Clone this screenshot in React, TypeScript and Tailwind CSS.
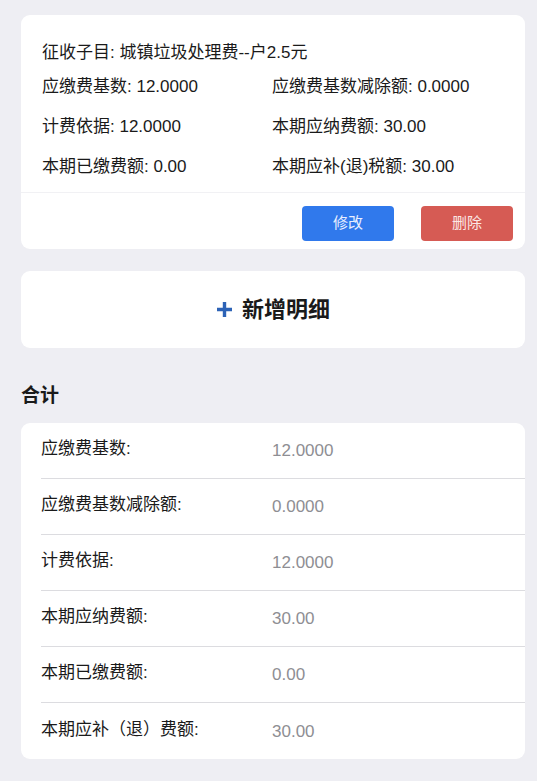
const detail = [
  ["应缴费基数: 12.0000", "应缴费基数减除额: 0.0000"],
  ["计费依据: 12.0000", "本期应纳费额: 30.00"],
  ["本期已缴费额: 0.00", "本期应补(退)税额: 30.00"],
]

const totals = [
  ["应缴费基数:", "12.0000"],
  ["应缴费基数减除额:", "0.0000"],
  ["计费依据:", "12.0000"],
  ["本期应纳费额:", "30.00"],
  ["本期已缴费额:", "0.00"],
  ["本期应补（退）费额:", "30.00"],
]

const App = () => {
  return (
    <div
      className="min-h-screen bg-[#eeeef3] pl-[21px] pr-[12px] pt-[15px] pb-6 text-[#1a1a1a]"
      style={{ fontFamily: '"Liberation Sans", "Noto Sans CJK SC", sans-serif' }}
    >
      {/* detail card */}
      <div className="bg-white rounded-[9px] overflow-hidden">
        <div className="pl-[21px] pt-[26px] pb-[13px]">
          <p className="text-[17px] leading-[24px]">征收子目: 城镇垃圾处理费--户2.5元</p>
          <div className="grid grid-cols-[230px_1fr] gap-y-[16px] mt-[10px]">
            {detail.map((row) =>
              row.map((cell) => (
                <p key={cell} className="text-[17px] leading-[24px] whitespace-nowrap">
                  {cell}
                </p>
              ))
            )}
          </div>
        </div>
        <div className="border-t border-[#f1f1f4] flex justify-end gap-[27px] pr-[12px] pt-[13px] pb-[8px]">
          <button className="w-[92px] h-[35px] rounded-[4px] bg-[#3079ec] text-[15px] text-[#e8efff]">修改</button>
          <button className="w-[92px] h-[35px] rounded-[4px] bg-[#d65b54] text-[15px] text-[#fbe7e6]">删除</button>
        </div>
      </div>

      {/* add button */}
      <div className="mt-[22px] h-[77px] bg-white rounded-[9px] flex items-center justify-center gap-[9px]">
        <svg width="17" height="17" viewBox="0 0 17 17">
          <path d="M8.5 1v15M1 8.5h15" stroke="#2d63b6" strokeWidth="3.4" />
        </svg>
        <span className="text-[22px] font-bold leading-none">新增明细</span>
      </div>

      {/* totals */}
      <h2 className="mt-[34px] mb-[13px] text-[19px] font-bold leading-[28px]">合计</h2>
      <div className="bg-white rounded-[9px] overflow-hidden">
        {totals.map(([label, value], i) => (
          <div
            key={label}
            className={`ml-[20px] h-[56px] flex items-center ${i < totals.length - 1 ? "border-b border-[#dcdce0]" : ""}`}
          >
            <span className="w-[231px] text-[17px] pb-[3px]">{label}</span>
            <span className="text-[17px] text-[#8e8e93] pt-[1px]">{value}</span>
          </div>
        ))}
      </div>
    </div>
  )
}

export default App
